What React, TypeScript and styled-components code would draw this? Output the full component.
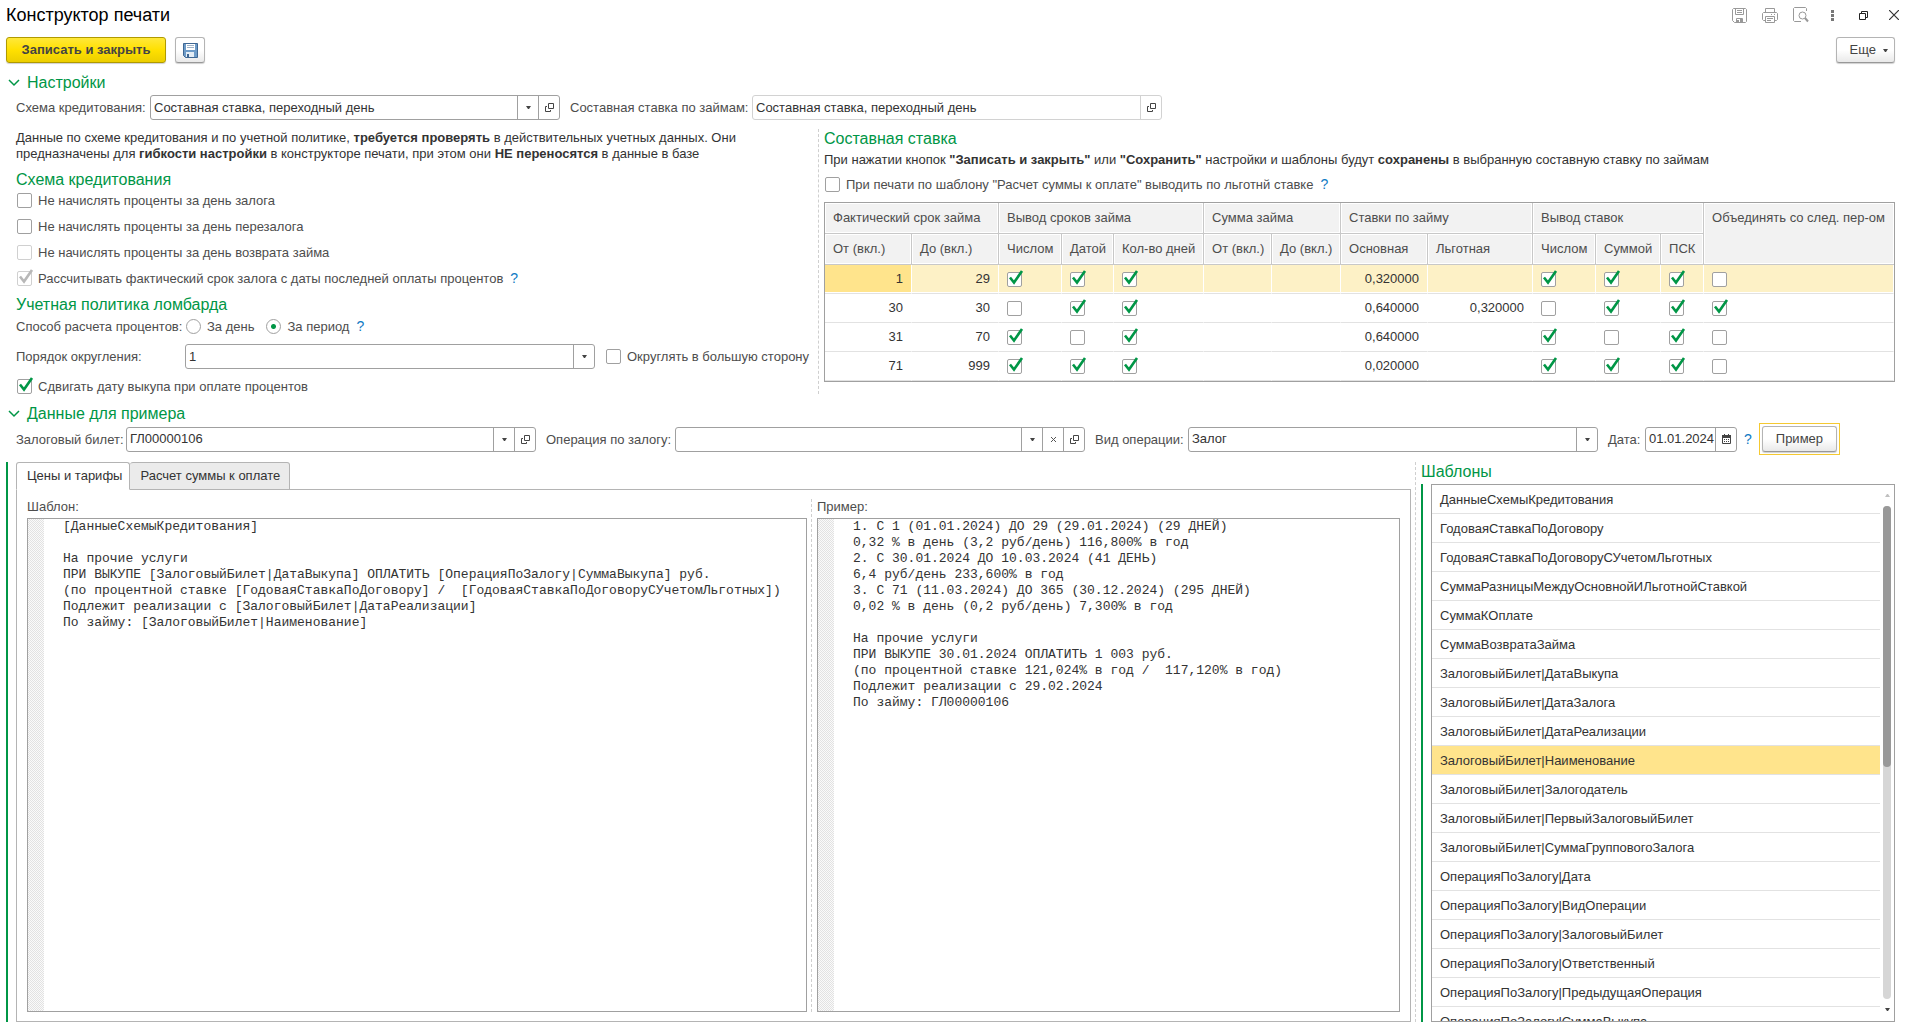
import React, { useState } from 'react';
import styled, { createGlobalStyle, css } from 'styled-components';

const GREEN = '#009646';
const LINE = '#a0a0a0';

const GlobalStyle = createGlobalStyle`
  *, *::before, *::after { box-sizing: border-box; }
  body {
    margin: 0;
    background: #fff;
    color: #333;
    font-family: "Liberation Sans", Arial, sans-serif;
    font-size: 13px;
    line-height: 16px;
  }
  button, input, select, textarea {
    font: inherit;
    color: inherit;
    margin: 0;
    border-radius: 0;
  }
`;

const Page = styled.main`
  display: flex;
  flex-direction: column;
  height: 100vh;
  min-height: 720px;
  padding: 0 12px 10px 6px;
`;

const TitleBar = styled.header`
  display: flex;
  justify-content: space-between;
  align-items: center;
  height: 30px;
  margin-right: -8px;
`;

const Title = styled.h1`
  margin: 0;
  font-size: 18px;
  font-weight: 400;
  line-height: 20px;
  color: #000;
`;

const WindowTools = styled.div`
  display: flex;
  align-items: center;
  gap: 13px;
`;

const IconButton = styled.button`
  display: grid;
  place-items: center;
  width: 18px;
  height: 18px;
  padding: 0;
  border: 0;
  background: none;
`;

const Toolbar = styled.div`
  display: flex;
  gap: 9px;
  padding-top: 7px;
`;

const PushButton = styled.button`
  display: flex;
  align-items: center;
  justify-content: center;
  height: 26px;
  padding: 0 13px;
  border: 1px solid #b4b4b4;
  border-bottom-color: #989898;
  border-radius: 3px;
  background: linear-gradient(#fff 50%, #e9e9e9);
  box-shadow: 0 1px 1px #d0d0d0;
  color: #444;
  white-space: nowrap;
`;

const PrimaryButton = styled(PushButton)`
  min-width: 160px;
  border-color: #b09a00;
  background: linear-gradient(#ffe83a, #ffe000 50%, #ecce00);
  font-weight: 700;
`;

const SquareButton = styled(PushButton)`
  width: 30px;
  padding: 0;
`;

const MoreButton = styled(PushButton)`
  gap: 7px;
  margin-left: auto;
  padding: 0 6px 0 13px;
`;

const FocusFrame = styled.div`
  margin: -3px 0 -3px 7px;
  padding: 2px;
  border: 1px solid #f5c931;
`;

const SectionHead = styled.h2`
  display: flex;
  align-items: center;
  gap: 7px;
  height: 20px;
  margin: 10px 0 2px 2px;
  font-size: 16px;
  font-weight: 400;
  color: ${GREEN};
`;

const GroupTitle = styled.h3`
  margin: 0;
  font-size: 16px;
  font-weight: 400;
  line-height: 20px;
  color: ${GREEN};
`;

const FieldRow = styled.div`
  display: flex;
  align-items: center;
  padding-left: 10px;
`;

const Label = styled.label<{ $w: number; $gap?: number }>`
  flex: 0 0 ${(p) => p.$w}px;
  margin-left: ${(p) => p.$gap ?? 0}px;
  color: #4d4d4d;
  line-height: 15px;
  white-space: nowrap;
`;

const Field = styled.div<{ $w: number; $muted?: boolean }>`
  display: flex;
  flex: 0 1 ${(p) => p.$w}px;
  min-width: 0;
  height: 25px;
  border: 1px solid ${(p) => (p.$muted ? '#d2d2d2' : LINE)};
  border-radius: 3px;
  background: #fff;

  && > * + * { border-left: 1px solid ${(p) => (p.$muted ? '#d2d2d2' : LINE)}; }
`;

const controlText = css`
  flex: 1;
  min-width: 0;
  padding: 0 0 0 3px;
  border: 0;
  background: none;
  appearance: none;
  outline: 0;
`;

const Select = styled.select`${controlText}`;
const TextInput = styled.input`${controlText}`;

const FieldButton = styled.button`
  display: grid;
  place-items: center;
  flex: 0 0 21px;
  padding: 0;
  border: 0;
  background: none;
`;

const Help = styled.button`
  padding: 0;
  border: 0;
  margin-left: 7px;
  background: none;
  color: #0f7ac4;
  font-size: 14px;
  line-height: 15px;
`;

const CheckLabel = styled.label<{ $gap?: number }>`
  display: flex;
  align-items: center;
  gap: 6px;
  height: 15px;
  margin-left: ${(p) => p.$gap ?? 1}px;
  color: #4d4d4d;
  white-space: nowrap;
`;

const CheckCell = styled.span`
  display: inline-grid;
  width: 15px;
  height: 15px;

  > * { grid-area: 1 / 1; }
  > svg { pointer-events: none; overflow: visible; }
`;

const CheckInput = styled.input`
  appearance: none;
  width: 15px;
  height: 15px;
  border: 1px solid ${LINE};
  border-radius: 2px;
  background: #fff;
  &:disabled { border-color: #d0d0d0; }
`;

const RadioInput = styled.input`
  appearance: none;
  width: 15px;
  height: 15px;
  border: 1px solid ${LINE};
  border-radius: 50%;
  background: #fff;
  &:checked { background: radial-gradient(circle, ${GREEN} 2px, #fff 3px); }
`;

const Columns = styled.div`
  display: grid;
  grid-template-columns: 802fr 1077fr;
  margin: 9px 0 0 10px;
`;

const LeftColumn = styled.div`
  min-width: 0;
  padding: 1px 7px 0 0;
`;

const RightColumn = styled.div`
  min-width: 0;
  padding-left: 5px;
  border-left: 1px dashed #cfcfcf;
`;

const Note = styled.p<{ $gap?: number }>`
  margin: ${(p) => p.$gap ?? 0}px 0 8px;
`;

const CheckList = styled.div`
  display: flex;
  flex-direction: column;
  gap: 11px;
  margin: 3px 0 9px;
`;

const InlineRow = styled.div<{ $top?: number }>`
  display: flex;
  align-items: center;
  margin-top: ${(p) => p.$top ?? 0}px;
`;

const RadioSet = styled.div`
  display: flex;
  gap: 11px;
`;

const Table = styled.table`
  width: 100%;
  margin-top: 10px;
  border: 1px solid ${LINE};
  border-spacing: 0;
  table-layout: fixed;
`;

const Th = styled.th`
  height: 31px;
  padding: 0 8px;
  border: solid #c8c8c8;
  border-width: 0 1px 1px 0;
  background: #f2f2f2;
  box-shadow: inset 0 0 0 1px #fff;
  color: #4d4d4d;
  font-weight: 400;
  text-align: left;
  white-space: nowrap;
  &[rowspan] {
    padding-top: 7px;
    border-right: 0;
    vertical-align: top;
  }
`;

const Tr = styled.tr<{ $current?: boolean }>`
  ${(p) => p.$current && css`
    background: #fdf1c6;
    && > td { border-right-color: #fff; box-shadow: inset 0 -1px #fff; }
    && > td:first-child { background: #ffe48c; }
  `}
`;

const Td = styled.td`
  height: 29px;
  padding: 0 8px;
  border: solid #e2e2e2;
  border-width: 0 1px 1px 0;
  border-right-color: transparent;
  text-align: right;
`;

const BoxTd = styled(Td)`
  text-align: left;
  ${CheckCell} { vertical-align: middle; }
`;

const Workspace = styled.div`
  display: grid;
  grid-template-columns: 1405fr 480fr;
  gap: 4px;
  flex: 1;
  min-height: 0;
  margin-top: 10px;
`;

const Editors = styled.section`
  display: flex;
  flex-direction: column;
  min-width: 0;
  padding-left: 8px;
  border-left: 2px solid ${GREEN};
`;

const Tabs = styled.div`
  display: flex;
  height: 28px;
`;

const Tab = styled.button<{ $active?: boolean }>`
  height: 28px;
  padding: 0 9px 0 10px;
  border: 1px solid #b4b4b4;
  border-radius: 3px 3px 0 0;
  background: #ebebeb;
  white-space: nowrap;
  & + & { border-left: 0; }
  ${(p) => p.$active && css`
    padding-right: 7px;
    border-bottom-color: #fff;
    background: #fff;
    z-index: 1;
  `}
`;

const TabPanel = styled.div`
  display: flex;
  flex: 1;
  min-height: 0;
  margin-top: -1px;
  padding: 9px 10px;
  border: 1px solid #b4b4b4;
`;

const Pane = styled.div<{ $grow: number }>`
  display: flex;
  flex-direction: column;
  flex: ${(p) => p.$grow} 1 0;
  gap: 3px;
  min-width: 0;
`;

const PaneLabel = styled.label`
  color: #4d4d4d;
`;

const Splitter = styled.div`
  margin: 0 5px 0 4px;
  border-left: 1px dashed #cfcfcf;
`;

const Editor = styled.div`
  display: flex;
  flex: 1;
  min-height: 0;
  border: 1px solid ${LINE};
`;

const Gutter = styled.div`
  flex: 0 0 16px;
  background: repeating-conic-gradient(#e2e2e2 0 25%, #fafafa 0 50%) 0 0 / 2px 2px;
`;

const Code = styled.textarea`
  flex: 1;
  min-width: 0;
  padding: 0 0 0 19px;
  border: 0;
  outline: 0;
  resize: none;
  overflow: hidden;
  background: #fff;
  font-family: "Liberation Mono", "Courier New", monospace;
  line-height: 16px;
  white-space: pre;
`;

const Templates = styled.section`
  display: flex;
  flex-direction: column;
  min-width: 0;
  min-height: 0;
  padding-left: 5px;
  border-left: 1px dashed #cfcfcf;
`;

const TemplatesBody = styled.div`
  display: flex;
  flex: 1;
  min-height: 0;
  margin-top: 2px;
  padding-left: 8px;
  border-left: 2px solid ${GREEN};
`;

const ListFrame = styled.div`
  display: flex;
  flex: 1;
  min-width: 0;
  border: 1px solid ${LINE};
`;

const List = styled.ul`
  flex: 1;
  min-width: 0;
  margin: 0;
  padding: 0;
  overflow: hidden;
  list-style: none;
`;

const Item = styled.li<{ $current?: boolean }>`
  height: 29px;
  padding: 0 8px;
  border-bottom: 1px solid #e2e2e2;
  background: ${(p) => (p.$current ? '#ffe48c' : '#fff')};
  line-height: 29px;
`;

const Scroll = styled.div`
  display: flex;
  flex-direction: column;
  align-items: center;
  flex: 0 0 14px;
  gap: 9px;
  padding: 9px 0 10px;
`;

const Track = styled.div`
  flex: 1;
  width: 8px;
  border-radius: 4px;
  background: #d6d6d6;
`;

const Thumb = styled.div`
  height: 53%;
  border-radius: 4px;
  background: #999;
`;

const Arrow = ({ up, color = '#444' }: { up?: boolean; color?: string }) => (
  <svg width="5" height="3" viewBox="0 0 5 3" fill={color}>
    <path d={up ? 'M0 3 2 0h1l2 3z' : 'M0 0h5L3 3H2z'} />
  </svg>
);

const OpenIcon = () => (
  <svg width="9" height="9" viewBox="0 0 9 9" fill="none" stroke="#444">
    <path d="M3.500.5h5v5h-5zM2 3.500H.5v5h5V7" />
  </svg>
);

const Chevron = () => (
  <svg width="12" height="8" viewBox="0 0 12 8" fill="none" stroke={GREEN} strokeWidth="1.500">
    <path d="m1 1 5 5 5-5" />
  </svg>
);

const DiskIcon = () => (
  <svg width="15" height="15" viewBox="0 0 15 15">
    <path d="M.5.5h14v14h-12l-2-2z" fill="#6d9bc8" stroke="#3f6793" />
    <path d="M3 1h9v6H3z" fill="#fff" />
    <path d="M4 2.500h7M4 4.500h7" stroke="#9fb3c8" />
    <path d="M3 9h8v5H3z" fill="#e4edf5" />
    <path d="M4 11h2v3H4z" fill="#3f6793" />
  </svg>
);

const SaveLineIcon = () => (
  <svg width="15" height="15" viewBox="0 0 15 15" fill="none" stroke="#999">
    <path d="M1.500.5h12l1 1v12l-1 1h-11l-2-2v-11zM3.500.5v6h8v-6M5 2.500h5M5 4.500h5M4.500 14v-3.500h6V14" />
    <path d="M5 12h2v2H5zM8 11h2v3H8z" fill="#999" stroke="none" />
  </svg>
);

const PrinterIcon = () => (
  <svg width="16" height="15" viewBox="0 0 16 15" fill="none" stroke="#999">
    <path d="M3.500 4.500v-4h9v4M3.500 12.500h-2l-1-1v-6l1-1h13l1 1v6l-1 1h-2M3.500 8.500h9v6h-9zM5 10.500h6M5 12.500h4M9 6.500h1M12 6.500h1" />
  </svg>
);

const PreviewIcon = () => (
  <svg width="16" height="16" viewBox="0 0 16 16" fill="none" stroke="#999">
    <path d="M13.500 4V1.500l-1-1h-11l-1 1v12l1 1H8" />
    <circle cx="9.500" cy="8.500" r="3.500" />
    <path d="m12 11 3 3.500" strokeWidth="2" />
  </svg>
);

const DotsIcon = () => (
  <svg width="3" height="11" viewBox="0 0 3 11" fill="#777">
    <path d="M0 0h3v3H0zM0 4h3v3H0zM0 8h3v3H0z" />
  </svg>
);

const RestoreIcon = () => (
  <svg width="9" height="9" viewBox="0 0 9 9" fill="none" stroke="#222">
    <path d="M.5 2.500h6v6h-6zM2.500 2.500v-2h6v6h-2" />
  </svg>
);

const CloseIcon = () => (
  <svg width="10" height="10" viewBox="0 0 10 10" fill="none" stroke="#333" strokeWidth="1.200">
    <path d="m0 0 10 10M10 0 0 10" />
  </svg>
);

const CalendarIcon = () => (
  <svg width="9" height="10" viewBox="0 0 9 10">
    <path d="M.5 1.500h8v8h-8z" fill="#fff" stroke="#444" />
    <path d="M0 1h9v3H0zM2 0h1v2H2zM6 0h1v2H6z" fill="#444" />
    <path d="M2 5.500h5M2 7.500h5" stroke="#444" strokeDasharray="1 1" />
  </svg>
);

type CheckProps = { on?: boolean; disabled?: boolean; name?: string };

const Check = ({ on = false, disabled, name }: CheckProps) => {
  const [checked, setChecked] = useState(on);
  return (
    <CheckCell>
      <CheckInput
        type="checkbox"
        aria-label={name}
        checked={checked}
        disabled={disabled}
        onChange={(e) => setChecked(e.target.checked)}
      />
      {checked && (
        <svg width="15" height="15" viewBox="0 0 15 15" fill="none">
          <path d="M3 5.500 7 10.500 15 -1" stroke={disabled ? '#b8b8b8' : GREEN} strokeWidth="2.600" />
        </svg>
      )}
    </CheckCell>
  );
};

type ComboProps = { id: string; value: string; open?: boolean; clear?: boolean };

const Combo = ({ id, value, open, clear }: ComboProps) => (
  <Field $w={410}>
    <Select id={id} defaultValue={value}>
      <option value={value}>{value}</option>
    </Select>
    <FieldButton aria-label="Выбрать"><Arrow /></FieldButton>
    {clear && (
      <FieldButton aria-label="Очистить">
        <svg width="7" height="7" viewBox="0 0 7 7" stroke="#555"><path d="m1 1 5 5M6 1 1 6" /></svg>
      </FieldButton>
    )}
    {open && <FieldButton aria-label="Открыть"><OpenIcon /></FieldButton>}
  </Field>
);

const columnWidths = [87, 87, 63, 52, 90, 68, 69, 87, 105, 63, 65, 43, 190];

const subColumns = [
  'От (вкл.)', 'До (вкл.)', 'Числом', 'Датой', 'Кол-во дней', 'От (вкл.)', 'До (вкл.)',
  'Основная', 'Льготная', 'Числом', 'Суммой', 'ПСК',
];

const rates: (string | boolean)[][] = [
  ['1', '29', true, true, true, '', '', '0,320000', '', true, true, true, false],
  ['30', '30', false, true, true, '', '', '0,640000', '0,320000', false, true, true, true],
  ['31', '70', true, false, true, '', '', '0,640000', '', true, false, true, false],
  ['71', '999', true, true, true, '', '', '0,020000', '', true, true, true, false],
];

const templates = [
  'ДанныеСхемыКредитования',
  'ГодоваяСтавкаПоДоговору',
  'ГодоваяСтавкаПоДоговоруСУчетомЛьготных',
  'СуммаРазницыМеждуОсновнойИЛьготнойСтавкой',
  'СуммаКОплате',
  'СуммаВозвратаЗайма',
  'ЗалоговыйБилет|ДатаВыкупа',
  'ЗалоговыйБилет|ДатаЗалога',
  'ЗалоговыйБилет|ДатаРеализации',
  'ЗалоговыйБилет|Наименование',
  'ЗалоговыйБилет|Залогодатель',
  'ЗалоговыйБилет|ПервыйЗалоговыйБилет',
  'ЗалоговыйБилет|СуммаГрупповогоЗалога',
  'ОперацияПоЗалогу|Дата',
  'ОперацияПоЗалогу|ВидОперации',
  'ОперацияПоЗалогу|ЗалоговыйБилет',
  'ОперацияПоЗалогу|Ответственный',
  'ОперацияПоЗалогу|ПредыдущаяОперация',
  'ОперацияПоЗалогу|СуммаВыкупа',
];

const templateText = `[ДанныеСхемыКредитования]

На прочие услуги
ПРИ ВЫКУПЕ [ЗалоговыйБилет|ДатаВыкупа] ОПЛАТИТЬ [ОперацияПоЗалогу|СуммаВыкупа] руб.
(по процентной ставке [ГодоваяСтавкаПоДоговору] /  [ГодоваяСтавкаПоДоговоруСУчетомЛьготных])
Подлежит реализации с [ЗалоговыйБилет|ДатаРеализации]
По займу: [ЗалоговыйБилет|Наименование]`;

const sampleText = `1. С 1 (01.01.2024) ДО 29 (29.01.2024) (29 ДНЕЙ)
0,32 % в день (3,2 руб/день) 116,800% в год
2. С 30.01.2024 ДО 10.03.2024 (41 ДЕНЬ)
6,4 руб/день 233,600% в год
3. С 71 (11.03.2024) ДО 365 (30.12.2024) (295 ДНЕЙ)
0,02 % в день (0,2 руб/день) 7,300% в год

На прочие услуги
ПРИ ВЫКУПЕ 30.01.2024 ОПЛАТИТЬ 1 003 руб.
(по процентной ставке 121,024% в год /  117,120% в год)
Подлежит реализации с 29.02.2024
По займу: ГЛ00000106`;

export default function App() {
  return (
    <Page>
      <GlobalStyle />
      <TitleBar>
        <Title>Конструктор печати</Title>
        <WindowTools>
          <IconButton aria-label="Сохранить"><SaveLineIcon /></IconButton>
          <IconButton aria-label="Печать"><PrinterIcon /></IconButton>
          <IconButton aria-label="Просмотр"><PreviewIcon /></IconButton>
          <IconButton aria-label="Меню"><DotsIcon /></IconButton>
          <IconButton aria-label="Свернуть в окно"><RestoreIcon /></IconButton>
          <IconButton aria-label="Закрыть"><CloseIcon /></IconButton>
        </WindowTools>
      </TitleBar>

      <Toolbar>
        <PrimaryButton>Записать и закрыть</PrimaryButton>
        <SquareButton aria-label="Записать"><DiskIcon /></SquareButton>
        <MoreButton>Еще <Arrow /></MoreButton>
      </Toolbar>

      <SectionHead><Chevron />Настройки</SectionHead>
      <FieldRow>
        <Label $w={134} htmlFor="scheme">Схема кредитования:</Label>
        <Combo id="scheme" value="Составная ставка, переходный день" open />
        <Label $w={182} $gap={10} htmlFor="compound">Составная ставка по займам:</Label>
        <Field $w={410} $muted>
          <TextInput id="compound" readOnly value="Составная ставка, переходный день" />
          <FieldButton aria-label="Открыть"><OpenIcon /></FieldButton>
        </Field>
      </FieldRow>

      <Columns>
        <LeftColumn>
          <Note>
            Данные по схеме кредитования и по учетной политике, <b>требуется проверять</b> в действительных
            учетных данных. Они предназначены для <b>гибкости настройки</b> в конструкторе печати, при этом
            они <b>НЕ переносятся</b> в данные в базе
          </Note>
          <GroupTitle>Схема кредитования</GroupTitle>
          <CheckList>
            <CheckLabel><Check />Не начислять проценты за день залога</CheckLabel>
            <CheckLabel><Check />Не начислять проценты за день перезалога</CheckLabel>
            <CheckLabel><Check disabled />Не начислять проценты за день возврата займа</CheckLabel>
            <InlineRow>
              <CheckLabel>
                <Check on disabled />Рассчитывать фактический срок залога с даты последней оплаты процентов
              </CheckLabel>
              <Help>?</Help>
            </InlineRow>
          </CheckList>
          <GroupTitle>Учетная политика ломбарда</GroupTitle>
          <InlineRow $top={4}>
            <Label as="span" $w={169}>Способ расчета процентов:</Label>
            <RadioSet>
              <CheckLabel><RadioInput type="radio" name="method" />За день</CheckLabel>
              <CheckLabel><RadioInput type="radio" name="method" defaultChecked />За период</CheckLabel>
            </RadioSet>
            <Help>?</Help>
          </InlineRow>
          <InlineRow $top={10}>
            <Label $w={169} htmlFor="rounding">Порядок округления:</Label>
            <Combo id="rounding" value="1" />
            <CheckLabel $gap={11}><Check />Округлять в большую сторону</CheckLabel>
          </InlineRow>
          <InlineRow $top={10}>
            <CheckLabel><Check on />Сдвигать дату выкупа при оплате процентов</CheckLabel>
          </InlineRow>
        </LeftColumn>

        <RightColumn>
          <GroupTitle>Составная ставка</GroupTitle>
          <Note $gap={3}>
            При нажатии кнопок <b>"Записать и закрыть"</b> или <b>"Сохранить"</b> настройки и шаблоны
            будут <b>сохранены</b> в выбранную составную ставку по займам
          </Note>
          <InlineRow $top={9}>
            <CheckLabel><Check />При печати по шаблону "Расчет суммы к оплате" выводить по льготнй ставке</CheckLabel>
            <Help>?</Help>
          </InlineRow>
          <Table>
            <colgroup>
              {columnWidths.map((w, i) => <col key={i} width={w} />)}
            </colgroup>
            <thead>
              <tr>
                <Th colSpan={2}>Фактический срок займа</Th>
                <Th colSpan={3}>Вывод сроков займа</Th>
                <Th colSpan={2}>Сумма займа</Th>
                <Th colSpan={2}>Ставки по займу</Th>
                <Th colSpan={3}>Вывод ставок</Th>
                <Th rowSpan={2}>Объединять со след. пер-ом</Th>
              </tr>
              <tr>{subColumns.map((c, i) => <Th key={i}>{c}</Th>)}</tr>
            </thead>
            <tbody>
              {rates.map((row, r) => (
                <Tr key={r} $current={r === 0}>
                  {row.map((v, c) =>
                    typeof v === 'boolean'
                      ? <BoxTd key={c}><Check on={v} name={subColumns[c] ?? 'Объединять со след. пер-ом'} /></BoxTd>
                      : <Td key={c}>{v}</Td>
                  )}
                </Tr>
              ))}
            </tbody>
          </Table>
        </RightColumn>
      </Columns>

      <SectionHead><Chevron />Данные для примера</SectionHead>
      <FieldRow>
        <Label $w={110} htmlFor="ticket">Залоговый билет:</Label>
        <Combo id="ticket" value="ГЛ00000106" open />
        <Label $w={129} $gap={10} htmlFor="operation">Операция по залогу:</Label>
        <Combo id="operation" value="" clear open />
        <Label $w={93} $gap={10} htmlFor="kind">Вид операции:</Label>
        <Combo id="kind" value="Залог" />
        <Label $w={37} $gap={10} htmlFor="date">Дата:</Label>
        <Field $w={92}>
          <TextInput id="date" defaultValue="01.01.2024" />
          <FieldButton aria-label="Календарь"><CalendarIcon /></FieldButton>
        </Field>
        <Help>?</Help>
        <FocusFrame>
          <PushButton>Пример</PushButton>
        </FocusFrame>
      </FieldRow>

      <Workspace>
        <Editors>
          <Tabs role="tablist">
            <Tab role="tab" aria-selected $active>Цены и тарифы</Tab>
            <Tab role="tab">Расчет суммы к оплате</Tab>
          </Tabs>
          <TabPanel>
            <Pane $grow={780}>
              <PaneLabel htmlFor="template">Шаблон:</PaneLabel>
              <Editor>
                <Gutter />
                <Code id="template" spellCheck={false} defaultValue={templateText} />
              </Editor>
            </Pane>
            <Splitter />
            <Pane $grow={583}>
              <PaneLabel htmlFor="sample">Пример:</PaneLabel>
              <Editor>
                <Gutter />
                <Code id="sample" spellCheck={false} readOnly value={sampleText} />
              </Editor>
            </Pane>
          </TabPanel>
        </Editors>

        <Templates>
          <GroupTitle>Шаблоны</GroupTitle>
          <TemplatesBody>
            <ListFrame>
              <List>
                {templates.map((t) => (
                  <Item key={t} $current={t === 'ЗалоговыйБилет|Наименование'}>{t}</Item>
                ))}
              </List>
              <Scroll>
                <Arrow up color="#c0c0c0" />
                <Track><Thumb /></Track>
                <Arrow />
              </Scroll>
            </ListFrame>
          </TemplatesBody>
        </Templates>
      </Workspace>
    </Page>
  );
}
